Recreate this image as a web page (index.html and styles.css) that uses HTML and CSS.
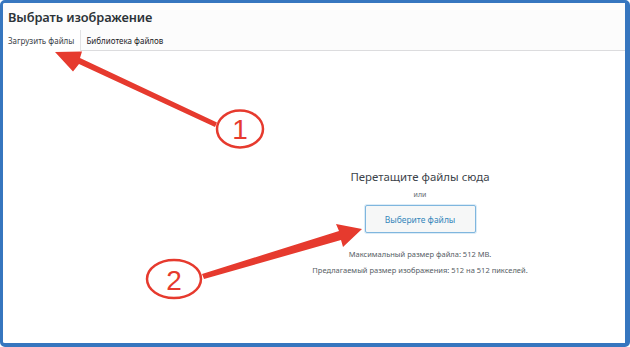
FILE: index.html
```html
<!DOCTYPE html>
<html lang="ru">
<head>
  <meta charset="UTF-8" />
  <title>Выбрать изображение</title>
  <link rel="stylesheet" href="styles.css">
</head>
<body>
  <div class="frame">
    <div class="head">
      <h1 class="title">Выбрать изображение</h1>
      <div class="tabs">
        <span class="tab active">Загрузить файлы</span>
        <span class="tab">Библиотека файлов</span>
      </div>
    </div>

    <div class="content">
      <div class="uploader">
        <p class="drop">Перетащите файлы сюда</p>
        <p class="or">или</p>
        <button class="pick">Выберите файлы</button>
        <p class="info">Максимальный размер файла: 512 MB.</p>
        <p class="info">Предлагаемый размер изображения: 512 на 512 пикселей.</p>
      </div>
    </div>

    <!-- пометки поверх скриншота -->
    <svg class="marks" width="630" height="347" viewBox="0 0 630 347">
      <polygon class="arrow" points="217,122.5 215,127 79,64 73,71.5 55,52 82,51.5 80,58" />
      <ellipse class="ring" cx="240" cy="129" rx="23" ry="18.5" />
      <text class="num" x="240" y="139">1</text>

      <polygon class="arrow" points="202,274 204,279 341,240 343,247 362,229 336,224 339,231" />
      <ellipse class="ring" cx="174" cy="279" rx="27" ry="19" />
      <text class="num" x="174" y="290">2</text>
    </svg>
  </div>
</body>
</html>
```

FILE: styles.css
```css
body {
  margin: 0;
  font-family: 'Noto Sans', 'Open Sans', sans-serif;
  color: #23282d;
}

.frame {
  position: relative;
  width: 630px;
  height: 347px;
  box-sizing: border-box;
  border: 3px solid #3676bf;
  border-right-width: 5px;
  border-bottom-width: 4px;
  border-radius: 5px;
  background: #fff;
  overflow: hidden;
}

.head {
  background: #fcfcfc;
  border-bottom: 1px solid #dcdcde;
  height: 48px;
  box-sizing: border-box;
}

.title {
  margin: 0;
  padding: 6px 0 0 5px;
  font-size: 12.8px;
  font-weight: 600;
  line-height: 17px;
  letter-spacing: -0.1px;
  color: #2c3338;
}

.tabs {
  display: flex;
  margin-top: 4px;
  height: 21px;
}

.tab {
  font-size: 8px;
  line-height: 21px;
  padding: 0 5px;
  color: #1d2327;
}

.tab.active {
  background: #fff;
  padding-right: 6px;
  border-right: 1px solid #e2e2e4;
  color: #3c434a;
}

.content {
  padding: 117px 0 0 212px;
}

.uploader {
  display: flex;
  flex-direction: column;
  align-items: center;
}

.drop {
  margin: 0;
  font-size: 11.4px;
  line-height: 18px;
  color: #3c434a;
}

.or {
  margin: 3px 0 0;
  font-size: 7px;
  line-height: 12px;
  color: #646970;
}

.pick {
  margin-top: 4px;
  width: 111px;
  height: 28px;
  border: 1px solid #7fb6de;
  border-radius: 2px;
  background: #f6f7f7;
  color: #3587bb;
  font-family: inherit;
  font-size: 8.5px;
  box-shadow: 0 0 0 1px #dcecf7;
}

.info {
  margin: 0;
  font-size: 7.5px;
  line-height: 16px;
  color: #555d64;
}

.pick + .info {
  margin-top: 13px;
}

.marks {
  position: absolute;
  left: -3px;
  top: -3px;
}

.arrow {
  fill: #e63a2e;
}

.ring {
  fill: none;
  stroke: #e63a2e;
  stroke-width: 2.5;
}

.num {
  fill: #e63a2e;
  font-family: 'Liberation Sans', sans-serif;
  font-size: 28px;
  text-anchor: middle;
}
```
